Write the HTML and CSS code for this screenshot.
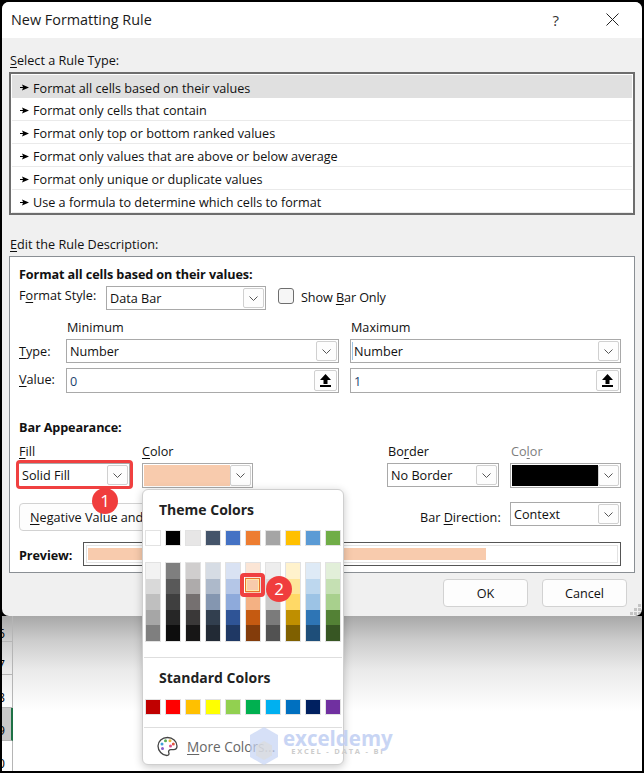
FILE: index.html
```html
<!DOCTYPE html>
<html lang="en">
<head>
<meta charset="utf-8">
<title>New Formatting Rule</title>
<link rel="stylesheet" href="styles.css">
</head>
<body>
<div class="page">
  <div class="dialog">
    <header class="titlebar">
      <span class="title">New Formatting Rule</span>
      <span class="help">?</span>
      <svg class="close" width="13" height="13" viewBox="0 0 13 13"><path d="M.5.5l12 12M12.5.5l-12 12" stroke="#222" fill="none"/></svg>
    </header>
    <div class="body">
      <div class="label"><u>S</u>elect a Rule Type:</div>
      <ul class="rules">
        <li class="rule selected"><svg class="arrow" width="9" height="7" viewBox="0 0 9 7"><path d="M0 3h3L2 .5 9 3.5 2 6.500 3 4H0z"/></svg>Format all cells based on their values</li>
        <li class="rule"><svg class="arrow" width="9" height="7" viewBox="0 0 9 7"><path d="M0 3h3L2 .5 9 3.5 2 6.500 3 4H0z"/></svg>Format only cells that contain</li>
        <li class="rule"><svg class="arrow" width="9" height="7" viewBox="0 0 9 7"><path d="M0 3h3L2 .5 9 3.5 2 6.500 3 4H0z"/></svg>Format only top or bottom ranked values</li>
        <li class="rule"><svg class="arrow" width="9" height="7" viewBox="0 0 9 7"><path d="M0 3h3L2 .5 9 3.5 2 6.500 3 4H0z"/></svg>Format only values that are above or below average</li>
        <li class="rule"><svg class="arrow" width="9" height="7" viewBox="0 0 9 7"><path d="M0 3h3L2 .5 9 3.5 2 6.500 3 4H0z"/></svg>Format only unique or duplicate values</li>
        <li class="rule"><svg class="arrow" width="9" height="7" viewBox="0 0 9 7"><path d="M0 3h3L2 .5 9 3.5 2 6.500 3 4H0z"/></svg>Use a formula to determine which cells to format</li>
      </ul>
      <div class="label label-edit"><u>E</u>dit the Rule Description:</div>
      <section class="desc">
        <div class="heading">Format all cells based on their values:</div>
        <div class="style-row">
          <span class="style-label">F<u>o</u>rmat Style:</span>
          <div class="select style-select"><span>Data Bar</span><span class="chev"><svg width="9" height="5" viewBox="0 0 9 5"><path d="M.5.5l4 4 4-4" fill="none" stroke="#555"/></svg></span></div>
          <span class="checkbox"></span>
          <span class="check-label">Show <u>B</u>ar Only</span>
        </div>
        <div class="minmax">
          <span></span><span class="cap">Minimum</span><span class="cap cap-r">Maximum</span>
          <span class="row-label row-type"><u>T</u>ype:</span>
          <div class="select"><span>Number</span><span class="chev"><svg width="9" height="5" viewBox="0 0 9 5"><path d="M.5.5l4 4 4-4" fill="none" stroke="#555"/></svg></span></div>
          <div class="select right"><span class="caret">Number</span><span class="chev"><svg width="9" height="5" viewBox="0 0 9 5"><path d="M.5.5l4 4 4-4" fill="none" stroke="#555"/></svg></span></div>
          <span class="row-label row-value"><u>V</u>alue:</span>
          <div class="select input"><span class="num">0</span><span class="spin"><svg width="11" height="13" viewBox="0 0 11 13"><path d="M5.500 0L11 6H7.500v4h-4V6H0z"/><path d="M0 11h11v2H0z"/></svg></span></div>
          <div class="select input right"><span class="num">1</span><span class="spin"><svg width="11" height="13" viewBox="0 0 11 13"><path d="M5.500 0L11 6H7.500v4h-4V6H0z"/><path d="M0 11h11v2H0z"/></svg></span></div>
        </div>
        <div class="heading heading-bar">Bar Appearance:</div>
        <div class="bar-grid">
          <span class="cap"><u>F</u>ill</span>
          <span class="cap cap-color"><u>C</u>olor</span>
          <span class="cap">Bo<u>r</u>der</span>
          <span class="cap muted">Co<u>l</u>or</span>
          <div class="select w-fill"><span>Solid Fill</span><span class="chev"><svg width="9" height="5" viewBox="0 0 9 5"><path d="M.5.5l4 4 4-4" fill="none" stroke="#555"/></svg></span></div>
          <div class="select color w-color"><span class="fill peach"></span><span class="chev"><svg width="9" height="5" viewBox="0 0 9 5"><path d="M.5.5l4 4 4-4" fill="none" stroke="#555"/></svg></span></div>
          <div class="select w-border"><span>No Border</span><span class="chev"><svg width="9" height="5" viewBox="0 0 9 5"><path d="M.5.5l4 4 4-4" fill="none" stroke="#555"/></svg></span></div>
          <div class="select color w-color"><span class="fill black"></span><span class="chev"><svg width="9" height="5" viewBox="0 0 9 5"><path d="M.5.5l4 4 4-4" fill="none" stroke="#555"/></svg></span></div>
        </div>
        <div class="neg-row">
          <button class="btn neg"><u>N</u>egative Value and Axis...</button>
          <div class="dir">
            <span class="dir-label">Bar <u>D</u>irection:</span>
            <div class="select w-color context"><span>Context</span><span class="chev"><svg width="9" height="5" viewBox="0 0 9 5"><path d="M.5.5l4 4 4-4" fill="none" stroke="#555"/></svg></span></div>
          </div>
        </div>
        <div class="preview-row">
          <span class="preview-label">Preview:</span>
          <div class="preview"><div class="preview-inner"><div class="preview-bar"></div></div></div>
        </div>
      </section>
      <footer class="footer">
        <button class="btn action">OK</button>
        <button class="btn action">Cancel</button>
      </footer>
    </div>
    <svg class="grip" width="11" height="11" viewBox="0 0 11 11"><path fill="#c4c4c4" d="M8 0h3v3H8zM4 4h3v3H4zM8 4h3v3H8zM0 8h3v3H0zM4 8h3v3H4zM8 8h3v3H8z"/></svg>
  </div>
  <div class="sheet">
    <div class="rowhead h26">6</div>
    <div class="rowhead">7</div>
    <div class="rowhead">8</div>
    <div class="rowhead active">9</div>
    <div class="rowhead h30">10</div>
  </div>

  <div class="popup">
    <div class="pop-head">Theme Colors</div>
    <div class="swatches base">
      <i style="background:#fff"></i><i style="background:#000"></i><i style="background:#e7e6e6"></i><i style="background:#44546a"></i><i style="background:#4472c4"></i><i style="background:#ed7d31"></i><i style="background:#a5a5a5"></i><i style="background:#ffc000"></i><i style="background:#5b9bd5"></i><i style="background:#70ad47"></i>
    </div>
    <div class="swatches tints">
      <div class="tint"><i style="background:#f2f2f2"></i><i style="background:#d9d9d9"></i><i style="background:#bfbfbf"></i><i style="background:#a6a6a6"></i><i style="background:#7f7f7f"></i></div>
      <div class="tint"><i style="background:#7f7f7f"></i><i style="background:#595959"></i><i style="background:#3f3f3f"></i><i style="background:#262626"></i><i style="background:#0d0d0d"></i></div>
      <div class="tint"><i style="background:#d0cece"></i><i style="background:#aeabab"></i><i style="background:#757070"></i><i style="background:#3a3838"></i><i style="background:#171616"></i></div>
      <div class="tint"><i style="background:#d6dce4"></i><i style="background:#adb9ca"></i><i style="background:#8496b0"></i><i style="background:#323f4f"></i><i style="background:#222a35"></i></div>
      <div class="tint"><i style="background:#d9e2f3"></i><i style="background:#b4c6e7"></i><i style="background:#8eaadb"></i><i style="background:#2f5496"></i><i style="background:#1f3864"></i></div>
      <div class="tint"><i style="background:#fbe5d5"></i><i style="background:#f7caac"></i><i style="background:#f4b183"></i><i style="background:#c55a11"></i><i style="background:#833c0b"></i></div>
      <div class="tint"><i style="background:#ededed"></i><i style="background:#dbdbdb"></i><i style="background:#c9c9c9"></i><i style="background:#7b7b7b"></i><i style="background:#525252"></i></div>
      <div class="tint"><i style="background:#fff2cc"></i><i style="background:#fee599"></i><i style="background:#ffd966"></i><i style="background:#bf8f00"></i><i style="background:#7f6000"></i></div>
      <div class="tint"><i style="background:#deeaf6"></i><i style="background:#bdd7ee"></i><i style="background:#9cc3e5"></i><i style="background:#2e75b5"></i><i style="background:#1e4e79"></i></div>
      <div class="tint"><i style="background:#e2efd9"></i><i style="background:#c5e0b3"></i><i style="background:#a8d08d"></i><i style="background:#538135"></i><i style="background:#375623"></i></div>
    </div>
    <hr class="sep sep-a">
    <div class="pop-head pop-head-b">Standard Colors</div>
    <div class="swatches base std">
      <i style="background:#c00000"></i><i style="background:#ff0000"></i><i style="background:#ffc000"></i><i style="background:#ffff00"></i><i style="background:#92d050"></i><i style="background:#00b050"></i><i style="background:#00b0f0"></i><i style="background:#0070c0"></i><i style="background:#002060"></i><i style="background:#7030a0"></i>
    </div>
    <hr class="sep sep-b">
    <div class="more">
      <svg class="palette" width="21" height="21" viewBox="0 0 21 21"><path d="M10.500 1.500C5 1.500 1 5.200 1 10c0 4.800 4.200 9.500 8.800 9.500 2 0 2.600-1.300 2-2.700-.7-1.700.2-3.100 2.100-3.100h2.600c2 0 3.500-1.400 3.500-3.700 0-4.800-4.400-8.500-9.500-8.500z" fill="#fff" stroke="#444" stroke-width="1.300"/><circle cx="5" cy="8" r="1.500" fill="#3fa2d8"/><circle cx="8.500" cy="4.800" r="1.500" fill="#57b05a"/><circle cx="13" cy="4.800" r="1.500" fill="#e8b93a"/><circle cx="16.300" cy="8" r="1.500" fill="#e2553f"/><circle cx="13.500" cy="10" r="1.500" fill="#d94f8c"/><circle cx="5.500" cy="12.500" r="1.500" fill="#8a5cc7"/></svg>
      <span class="more-text"><u>M</u>ore Colors...</span>
    </div>
  </div>

  <div class="watermark">
    <svg class="wm-logo" width="28" height="38" viewBox="0 0 28 38"><path d="M14 0l14 8v22l-14 8L0 30V8z" fill="#c5d3f3" opacity=".7"/><path d="M14 14l8 4.500v10L14 33l-8-4.500v-10z" fill="#dcdcdc" opacity=".7"/></svg>
    <div class="wm-text">
      <span class="wm-name">exceldemy</span>
      <span class="wm-sub">EXCEL - DATA - BI</span>
    </div>
  </div>

  <div class="mark mark-fill"></div>
  <div class="mark mark-swatch"><span class="mark-inner"></span></div>
  <div class="badge badge-1">1</div>
  <div class="badge badge-2">2</div>
</div>
</body>
</html>
```
FILE: styles.css
```css
* { box-sizing: border-box; }
html, body { margin: 0; padding: 0; background: #000; }
.page {
  position: relative;
  width: 644px;
  height: 773px;
  padding: 2px;
  overflow: hidden;
  background: #000;
  display: flex;
  flex-direction: column;
  font: 12.65px/18px "Open Sans", sans-serif;
  color: #111;
}
u { text-underline-offset: 2px; }

.dialog { position: relative; z-index: 1; width: 640px; height: 614px; background: #f0f0f0; border-radius: 7px; overflow: hidden; flex: none; }
.titlebar { height: 36px; background: #fff; display: flex; align-items: center; padding: 0 23px 0 9px; }
.title { font-size: 14.4px; flex: 1; color: #1a1a1a; }
.help { font-size: 15px; margin: 0 47px 1px 0; color: #333; }
.close { display: block; margin-bottom: 2px; }

.body { padding: 13px 7px 0; }
.label { padding-left: 1px; }
.label-edit { margin-top: 20px; }

.rules { list-style: none; margin: 3px 0 0; padding: 1px 1px 0; height: 143px; background: #fff; border: 2px solid #6d6d6d; }
.rule { height: 23px; padding: 2px 0 0 8px; display: flex; align-items: center; gap: 4px; border-bottom: 1px solid #eaeaea; }
.rule.selected { background: #e0e0e0; border-bottom: 0; }
.arrow { flex: none; }

.desc { margin-top: 3px; height: 317px; background: #fff; border: 1px solid #8a8f94; padding: 8px 13px 0 9px; }
.heading { font-weight: 700; letter-spacing: -.11px; }
.heading-bar { margin-top: 27px; }

.select { display: flex; align-items: center; justify-content: space-between; height: 24px; padding: 1px 1px 1px 3px; background: #fff; border: 1px solid #a9a9a9; }
.chev { display: flex; align-items: center; justify-content: center; width: 21px; height: 100%; background: #fdfdfd; border: 1px solid #d0d0d0; border-radius: 2px; }
.chev svg { display: block; }

.style-row { display: flex; align-items: flex-start; height: 24px; margin-top: 3px; }
.style-label { width: 87px; }
.style-select { width: 160px; }
.checkbox { width: 16px; height: 16px; margin: 2px 7px 0 12px; background: #f6f6f6; border: 1px solid #6e6e6e; border-radius: 3px; }
.check-label { margin-top: 2px; letter-spacing: -.1px; }

.minmax { display: grid; grid-template-columns: 47px 273px 282px; grid-template-rows: 18px 24px 25px; row-gap: 3px; margin-top: 8px; }
.right { margin-left: 11px; width: 271px; }
.cap-r { margin-left: 11px; }
.cap { padding-left: 1px; }
.cap-color { padding-left: 0; }
.row-label { align-self: center; }
.caret { border-left: 1px solid #9cc3e5; padding-left: 1px; margin-left: -2px; line-height: 18px; }
.input { height: 25px; margin-top: 2px; }
.num { color: #1c3f6e; }
.spin { display: flex; align-items: center; justify-content: center; width: 23px; height: 100%; background: #fdfdfd; border: 1px solid #d0d0d0; border-radius: 2px; }
.spin svg { display: block; }

.bar-grid { display: grid; grid-template-columns: 124px 245px 123px 111px; grid-template-rows: 18px 25px; row-gap: 3px; margin: 6px 0 0 -1px; }
.muted { color: #7d7d7d; }
.w-fill { width: 112px; height: 24px; }
.w-color { width: 111px; height: 25px; }
.w-border { width: 112px; height: 24px; }
.fill { flex: 1; height: 100%; margin: 1px 0; }
.peach { background: #f8cbad; }
.black { background: #000; }
.color { padding-left: 1px; }

.neg-row { display: flex; align-items: flex-start; margin-top: 14px; height: 29px; }
.btn { font: inherit; color: inherit; background: #fdfdfd; border: 1px solid #d2d2d2; border-radius: 4px; padding: 0; }
.neg { width: 170px; height: 28px; margin-top: 1px; text-align: left; padding-left: 10px; }
.dir { margin-left: auto; display: flex; align-items: flex-start; }
.dir-label { width: 90px; margin-top: 6px; }
.context { height: 24px; }

.preview-row { display: flex; align-items: center; margin-top: 11px; height: 24px; }
.preview-label { width: 64px; font-weight: 700; letter-spacing: -.11px; padding-top: 2px; }
.preview { width: 539px; height: 24px; padding: 2px; background: #fff; border: 1px solid #555; }
.preview-inner { height: 100%; padding: 2px 1px; border: 1px solid #e2e2e2; }
.preview-bar { width: 398px; height: 100%; background: #f8cbad; }

.footer { display: flex; justify-content: flex-end; gap: 14px; padding-right: 8px; margin-top: 6px; }
.action { width: 85px; height: 28px; text-align: center; }
.grip { position: absolute; right: 1px; bottom: 1px; }

.sheet { flex: 1; width: 11px; position: relative; }
.sheet::before { content: ""; position: absolute; left: 0; top: 0; width: 640px; height: 155px; background: linear-gradient(#a8a8a8, #cdcdcd 25px, #ebebeb 55px, #fff 95px); }
.rowhead { position: relative; height: 33px; width: 11px; padding: 6px 7px 0 0; overflow: hidden; direction: rtl; text-align: right; line-height: 33px; border-right: 1px solid #b5b5b5; border-bottom: 1px solid #b5b5b5; color: #000; }
.h26 { height: 26px; line-height: 26px; padding-top: 4px; }
.h30 { height: 30px; border-bottom: 0; }
.active { background: #c9c9c9; border-right: 2px solid #1e7145; padding-right: 6px; }

.popup { position: absolute; z-index: 2; left: 142px; top: 489px; width: 202px; height: 276px; background: #fff; border: 1px solid #cfcfcf; border-radius: 6px; box-shadow: 0 2px 9px rgba(0,0,0,.22); }
.pop-head { margin: 10px 0 0 16px; font-size: 14px; line-height: 20px; font-weight: 700; color: #222; }
.pop-head-b { margin-top: 10px; }
.swatches { display: flex; gap: 4px; margin: 10px 0 0 2px; }
.swatches > i { display: block; width: 16px; height: 16px; border: 1px solid #e2e2e2; }
.tints { margin-top: 16px; }
.tint { display: flex; flex-direction: column; width: 16px; height: 80px; border: 1px solid #e2e2e2; }
.tint i { display: block; flex: 1; }
.std { margin-top: 11px; }
.sep { height: 1px; margin: 15px 1px 0; border: 0; background: #dedede; }
.sep-b { margin-top: 12px; }
.more { display: flex; align-items: center; height: 36px; padding-left: 14px; gap: 9px; color: #666; }
.palette { display: block; }
.more-text { font-size: 13.6px; margin-top: 1px; }

.watermark { position: absolute; z-index: 3; left: 250px; top: 727px; display: flex; gap: 5px; pointer-events: none; }
.wm-logo { display: block; }
.wm-text { display: flex; flex-direction: column; align-items: center; }
.wm-name { font: 700 20.5px/23px "Open Sans", sans-serif; color: #bfcef3; opacity: .85; }
.wm-sub { font: 700 7.5px/10px "Open Sans", sans-serif; letter-spacing: 1.8px; color: #ccc; margin-top: -4px; }

.mark { position: absolute; z-index: 4; border: 3px solid #f04040; border-radius: 4px; }
.mark-fill { left: 16px; top: 460px; width: 117px; height: 29px; }
.mark-swatch { left: 240px; top: 573px; width: 25px; height: 24px; padding: 1px; border-width: 4px; }
.mark-inner { display: block; width: 100%; height: 100%; background: #f7caac; border: 1px solid #e8762b; outline: 1px solid #ffe9a8; outline-offset: -2px; }

.badge { position: absolute; z-index: 5; width: 26px; height: 26px; border-radius: 50%; background: #f03d3d; color: #fff; text-align: center; font-size: 17px; line-height: 26px; }
.badge-1 { left: 92px; top: 488px; }
.badge-2 { left: 266px; top: 576px; }
```
